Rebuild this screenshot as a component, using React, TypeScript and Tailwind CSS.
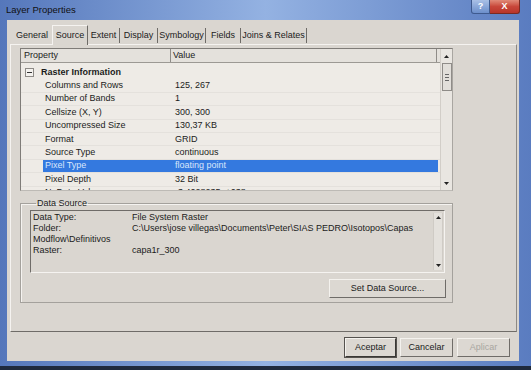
const tabs: [string, number][] = [
  ["General", 40],
  ["Source", 36],
  ["Extent", 32],
  ["Display", 38],
  ["Symbology", 48],
  ["Fields", 35],
  ["Joins & Relates", 66],
];

const rows: [string, string][] = [
  ["Columns and Rows", "125, 267"],
  ["Number of Bands", "1"],
  ["Cellsize (X, Y)", "300, 300"],
  ["Uncompressed Size", "130,37 KB"],
  ["Format", "GRID"],
  ["Source Type", "continuous"],
  ["Pixel Type", "floating point"],
  ["Pixel Depth", "32 Bit"],
  ["NoData Value", "-3,4028235e+038"],
];

const sourceInfo: [string, string][] = [
  ["Data Type:", "File System Raster"],
  ["Folder:", "C:\\Users\\jose villegas\\Documents\\Peter\\SIAS PEDRO\\Isotopos\\Capas"],
  ["Modflow\\Definitivos", ""],
  ["Raster:", "capa1r_300"],
];

function Arrow({ up }: { up?: boolean }) {
  return (
    <svg width="5" height="3" viewBox="0 0 5 3">
      <path d={up ? "M0 3 L2.5 0 L5 3 Z" : "M0 0 L2.5 3 L5 0 Z"} fill="#222" />
    </svg>
  );
}

function Button({ label, w, dim, main }: { label: string; w: number; dim?: boolean; main?: boolean }) {
  return (
    <div
      style={{ width: w }}
      className={
        "h-[19px] flex items-center justify-center bg-[#dcd8d2] border-t border-l border-t-[#f4f2ee] border-l-[#f4f2ee] border-r border-b " +
        (main ? "border-r-[#3a3835] border-b-[#3a3835] outline outline-1 outline-[#55524e] -outline-offset-0 " : "border-r-[#6f6c68] border-b-[#6f6c68] ") +
        (dim ? "text-[#a9a6a1]" : "text-[#1b1b1b]")
      }
    >
      {label}
    </div>
  );
}

export default function App() {
  return (
    <div className="w-[531px] h-[370px] overflow-hidden bg-[#1f2a3d] font-['Liberation_Sans',Arial,sans-serif] text-[9px] leading-none text-[#1b1b1b]">
      <div className="h-[366px] flex flex-col bg-gradient-to-r from-[#5577bb] via-[#94b2e2] to-[#5a7cc0]">
        {/* title bar */}
        <div className="h-[20px] flex items-start shrink-0">
          <span className="ml-[6px] mt-[5px] text-[9.5px] text-[#111]">Layer Properties</span>
          <div className="ml-auto mr-[11px] flex">
            <div className="w-[19px] h-[14px] flex items-center justify-center rounded-bl-[3px] border border-t-0 border-[#3e5a8e] bg-gradient-to-b from-[#a9c0e6] to-[#6c8fcb] text-white font-bold text-[9px]">
              ?
            </div>
            <div className="w-[30px] h-[14px] flex items-center justify-center rounded-br-[3px] border border-t-0 border-l-0 border-[#7a2a22] bg-gradient-to-b from-[#e08a78] via-[#c8473a] to-[#b8352a] text-white font-bold text-[9px]">
              X
            </div>
          </div>
        </div>

        {/* body */}
        <div className="ml-[7px] mr-[12px] h-[341px] bg-[#dad6d0] flex flex-col">
          {/* tabs */}
          <div className="mt-[4px] ml-[5px] h-[20px] flex items-end">
            {tabs.map(([name, w]) =>
              name === "Source" ? (
                <div
                  key={name}
                  style={{ width: w }}
                  className="h-[20px] flex items-start justify-center pt-[5px] border-t border-l border-[#f5f3f0] border-r border-r-[#6e6b67] relative z-10 -mb-[1px] bg-[#dad6d0]"
                >
                  {name}
                </div>
              ) : (
                <div key={name} style={{ width: w }} className="h-[18px] flex items-center">
                  <span className="flex-1 text-center pt-[1px]">{name}</span>
                  {name !== "General" && <span className="w-px h-[15px] bg-[#6e6b67]" />}
                </div>
              )
            )}
          </div>

          {/* tab panel */}
          <div className="ml-[3px] w-[507px] h-[288px] border-t border-l border-[#f5f3f0] border-r border-b border-r-[#8c8985] border-b-[#6f6c68] pl-[9px] pt-[3px]">
            {/* property grid */}
            <div className="w-[433px] h-[143px] border border-[#7f7c78] border-r-[#a9a6a1] border-b-[#bdbab5] bg-[#eeebe6] flex overflow-hidden">
              <div className="flex-1 flex flex-col min-w-0">
                <div className="h-[14px] shrink-0 flex items-center bg-[#e4e1dc] border-b border-[#9c9994]">
                  <div className="w-[150px] h-full flex items-center pl-[3px] border-r border-[#8f8c88]">Property</div>
                  <div className="flex-1 h-full flex items-center pl-[2px] border-r border-[#8f8c88]">Value</div>
                  <div className="w-[3px]" />
                </div>
                <div className="pt-[3px] flex flex-col">
                  <div className="h-[13.4px] flex items-center shrink-0">
                    <div className="ml-[4px] w-[9px] h-[9px] border border-[#8d8a86] bg-[#f4f2ee] flex items-center justify-center">
                      <span className="w-[5px] h-px bg-[#333]" />
                    </div>
                    <span className="ml-[7px] font-bold">Raster Information</span>
                  </div>
                  {rows.map(([k, v]) => {
                    const sel = k === "Pixel Type";
                    return (
                      <div key={k} className="h-[13.4px] flex shrink-0 border-b border-[#e4e1dc]">
                        <div className="w-[22px]" />
                        <div
                          className={
                            "w-[128px] pl-[2px] flex items-center " + (sel ? "bg-[#3479df] text-[#d9e6fb]" : "")
                          }
                        >
                          {k}
                        </div>
                        <div
                          className={
                            "flex-1 pl-[4px] flex items-center mr-[2px] " + (sel ? "bg-[#3479df] text-[#d9e6fb]" : "")
                          }
                        >
                          {v}
                        </div>
                      </div>
                    );
                  })}
                </div>
              </div>
              {/* scrollbar */}
              <div className="w-[12px] shrink-0 bg-[#e9e6e1] border-l border-[#d2cec8] flex flex-col items-center">
                <div className="h-[14px] flex items-center justify-center">
                  <Arrow up />
                </div>
                <div className="w-[10px] h-[28px] border border-[#8f8c88] bg-[#e2dfda] flex flex-col items-center justify-center gap-[2px]">
                  <span className="w-[4px] h-px bg-[#666]" />
                  <span className="w-[4px] h-px bg-[#666]" />
                  <span className="w-[4px] h-px bg-[#666]" />
                </div>
                <div className="flex-1" />
                <div className="h-[13px] flex items-center justify-center">
                  <Arrow />
                </div>
              </div>
            </div>

            {/* Data Source group */}
            <fieldset className="mt-[7px] w-[433px] border border-[#a4a19c] shadow-[inset_1px_1px_0_#f5f3f0] pl-[9px] pr-[6px] pb-[4px] flex flex-col">
              <legend className="ml-[6px] px-[1px] h-[11px] leading-[11px] text-[9px]">Data Source</legend>
              <div className="mt-[1px] w-[415px] h-[63px] border border-t-[#6f6c68] border-l-[#6f6c68] border-r-[#f5f3f0] border-b-[#f5f3f0] flex">
                <div className="flex-1 pl-[2px] pt-[1px] flex flex-col leading-[11px]">
                  {sourceInfo.map(([k, v]) => (
                    <div key={k} className="flex h-[11px]">
                      <span className="w-[99px] shrink-0 whitespace-nowrap">{k}</span>
                      <span className="whitespace-nowrap">{v}</span>
                    </div>
                  ))}
                </div>
                <div className="w-[10px] my-[2px] mr-[1px] border-l border-r border-[#cfcbc5] bg-[#e4e1dc] flex flex-col items-center justify-between py-[3px]">
                  <Arrow up />
                  <Arrow />
                </div>
              </div>
              <div className="mt-[6px] self-end">
                <Button label="Set Data Source..." w={117} />
              </div>
            </fieldset>
          </div>

          {/* dialog buttons */}
          <div className="mt-[6px] mr-[9px] flex justify-end gap-[4px]">
            <Button label="Aceptar" w={51} main />
            <Button label="Cancelar" w={53} />
            <Button label="Aplicar" w={53} dim />
          </div>
        </div>
      </div>
    </div>
  );
}
